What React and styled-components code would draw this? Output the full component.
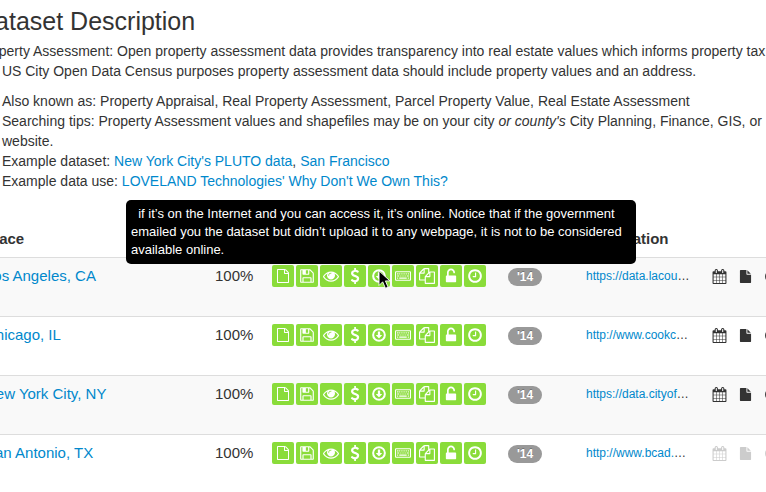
import React from 'react';
import styled, { createGlobalStyle, css } from 'styled-components';

const GlobalStyle = createGlobalStyle`
  body {
    margin: 0;
    background: #fff;
    color: #333;
    font: 14px/20px "Liberation Sans", Arial, sans-serif;
  }
`;

const Viewport = styled.div`
  overflow: hidden;
`;

const Page = styled.main`
  margin: 0 -23px;
  padding-top: 1px;
`;

const Title = styled.h3`
  margin: 0;
  font-size: 25px;
  font-weight: 400;
  line-height: 40px;
`;

const Intro = styled.p`
  margin: 0 0 10px;
`;

const Notes = styled.ul`
  margin: 0 0 36px 25px;
  padding: 0;
  list-style: none;
`;

const Link = styled.a`
  color: #0088cc;
  text-decoration: none;
`;

const Table = styled.table`
  width: 100%;
  table-layout: fixed;
  border-collapse: collapse;
  font-size: 15px;
`;

const Column = styled.col`
  width: ${(p) => p.$width}px;
`;

const HeadCell = styled.th`
  height: 20px;
  padding: 2px 8px 8px;
  text-align: left;
`;

const Row = styled.tr`
  background: ${(p) => (p.$shaded ? '#f9f9f9' : '#fff')};
`;

const Cell = styled.td`
  box-sizing: border-box;
  height: 59px;
  padding: 7px 8px;
  border-top: 1px solid #ddd;
  vertical-align: top;
  line-height: 22px;
  white-space: nowrap;
`;

const Badges = styled.div`
  display: flex;
  gap: 2px;
`;

const BadgeHolder = styled.div`
  position: relative;
`;

const Badge = styled.button`
  display: flex;
  align-items: center;
  justify-content: center;
  width: 22px;
  height: 22px;
  padding: 0;
  border: 0;
  border-radius: 2px;
  background: #8adc3a;
  color: #fff;
`;

const Tooltip = styled.div`
  position: absolute;
  bottom: calc(100% + 1px);
  left: -242px;
  z-index: 1;
  box-sizing: border-box;
  width: 510px;
  padding: 5px;
  border-radius: 5px;
  background: #000;
  color: #fff;
  font-size: 13px;
  line-height: 18px;
  white-space: normal;
`;

const Cursor = styled.svg`
  position: absolute;
  top: 5px;
  left: 10px;
  z-index: 2;
  width: 13px;
  height: 20px;
`;

const Line = styled.div`
  display: flex;
  align-items: center;
  height: 22px;
  gap: ${(p) => p.$gap || 0}px;
`;

const Year = styled.span`
  margin-top: 2px;
  padding: 0 9px;
  border-radius: 9px;
  background: #999;
  color: #fff;
  font-size: 12px;
  font-weight: 700;
  line-height: 18px;
  text-shadow: 0 -1px 0 rgba(0, 0, 0, 0.25);
`;

const Source = styled.span`
  font-size: 12px;
`;

const Glyph = styled.svg`
  display: block;
  flex: none;
  fill: currentColor;
  ${(p) => css`
    width: ${p.$size}px;
    height: ${p.$size}px;
    color: ${p.$color || 'inherit'};
  `}
`;

const PATHS = {
  file: 'M1596 380q28 28 48 76t20 88v1152q0 40-28 68t-68 28h-1344q-40 0-68-28t-28-68v-1600q0-40 28-68t68-28h896q40 0 88 20t76 48zm-444-244v376h376q-10-29-22-41l-313-313q-12-12-41-22zm384 1528v-1024h-416q-40 0-68-28t-28-68v-416h-768v1536h1280z',
  save: 'M512 1536h768v-384h-768v384zm896 0h128v-896q0-14-10-38.5t-20-34.5l-281-281q-10-10-34-20t-39-10v416q0 40-28 68t-68 28h-576q-40 0-68-28t-28-68v-416h-128v1280h128v-416q0-40 28-68t68-28h832q40 0 68 28t28 68v416zm-384-928v-320q0-13-9.5-22.5t-22.5-9.5h-192q-13 0-22.5 9.5t-9.5 22.5v320q0 13 9.5 22.5t22.5 9.5h192q13 0 22.5-9.5t9.5-22.5zm640 32v928q0 40-28 68t-68 28h-1344q-40 0-68-28t-28-68v-1344q0-40 28-68t68-28h928q40 0 88 20t76 48l280 280q28 28 48 76t20 88z',
  eye: 'M1664 960q-152-236-381-353 61 104 61 225 0 185-131.5 316.5t-316.5 131.5-316.5-131.5-131.5-316.5q0-121 61-225-229 117-381 353 133 205 333.5 326.5t434.5 121.5 434.5-121.5 333.5-326.5zm-720-384q0-20-14-34t-34-14q-125 0-214.5 89.5t-89.5 214.5q0 20 14 34t34 14 34-14 14-34q0-86 61-147t147-61q20 0 34-14t14-34zm848 384q0 34-20 69-140 230-376.5 368.5t-499.5 138.5-499.5-139-376.5-368q-20-35-20-69t20-69q140-229 376.5-368t499.5-139 499.5 139 376.5 368q20 35 20 69z',
  dollar: 'M1362 1185q0 153-99.5 263.5t-258.5 136.5v175q0 14-9 23t-23 9h-135q-13 0-22.5-9.5t-9.5-22.5v-175q-66-9-127.5-31t-101.5-44.5-74-48-46.5-37.5-17.5-18q-17-21-2-41l103-135q7-10 23-12 15-2 24 9l2 2q113 99 243 125 37 8 74 8 81 0 142.5-43t61.5-122q0-28-15-53t-33.5-42-58.5-37.5-66-32-80-32.5q-39-16-61.5-25t-61.5-26.5-62.5-31-56.5-35.5-53.5-42.5-43.5-49-35.5-58-21-66.5-8.5-78q0-138 98-242t255-134v-180q0-13 9.5-22.5t22.5-9.5h135q14 0 23 9t9 23v176q57 6 110.5 23t87 33.5 63.5 37.5 39 29 15 14q17 18 5 38l-81 146q-8 15-23 16-14 3-27-7-3-3-14.5-12t-39-26.5-58.5-32-74.5-26-85.5-11.5q-95 0-155 43t-60 111q0 26 8.5 48t29.5 41.5 39.5 33 56 31 60.5 27 70 27.5q53 20 81 31.5t76 35 75.5 42.5 62 50 53 63.5 31.5 76.5 13 94z',
  down: 'M896 128a768 768 0 1 0 0 1536a768 768 0 1 0 0-1536zM896 352a544 544 0 1 1 0 1088a544 544 0 1 1 0-1088zM800 512h192q32 0 32 32v352h192q34 0 20 38l-318 320q-22 20-44 0l-320-320q-16-38 18-38h196v-352q0-32 32-32z',
  keyboard: 'M0 384q0-128 128-128h1664q128 0 128 128v896q0 128-128 128h-1664q-128 0-128-128zM128 384v896h1664v-896zM256 512h160v128h-160zM512 512h128v128h-128zM768 512h128v128h-128zM1024 512h128v128h-128zM1280 512h128v128h-128zM1536 512h128v128h-128zM256 768h256v128h-256zM640 768h128v128h-128zM896 768h128v128h-128zM1152 768h128v128h-128zM1408 768h256v128h-256zM256 1024h128v128h-128zM512 1024h896v128h-896zM1536 1024h128v128h-128z',
  copy: 'M1696 384q40 0 68 28t28 68v1216q0 40-28 68t-68 28h-960q-40 0-68-28t-28-68v-288h-544q-40 0-68-28t-28-68v-672q0-40 20-88t48-76l408-408q28-28 76-48t88-20h416q40 0 68 28t28 68v328q68-40 128-40h416zm-544 213l-299 299h299v-299zm-640-384l-299 299h299v-299zm196 647l316-316v-416h-384v416q0 40-28 68t-68 28h-416v640h512v-256q0-40 20-88t48-76zm956 804v-1152h-384v416q0 40-28 68t-68 28h-416v640h896z',
  unlock: 'M1376 768q40 0 68 28t28 68v576q0 40-28 68t-68 28h-960q-40 0-68-28t-28-68v-576q0-40 28-68t68-28h32v-320q0-185 131.5-316.5t316.5-131.5 316.5 131.5 131.5 316.5q0 26-19 45t-45 19h-64q-26 0-45-19t-19-45q0-106-75-181t-181-75-181 75-75 181v320h736z',
  clock: 'M1024 544v448q0 14-9 23t-23 9h-320q-14 0-23-9t-9-23v-64q0-14 9-23t23-9h224v-352q0-14 9-23t23-9h64q14 0 23 9t9 23zm416 352q0-148-73-273t-198-198-273-73-273 73-198 198-73 273 73 273 198 198 273 73 273-73 198-198 73-273zm224 0q0 209-103 385.5t-279.5 279.5-385.5 103-385.5-103-279.5-279.5-103-385.5 103-385.5 279.5-279.5 385.5-103 385.5 103 279.5 279.5 103 385.5z',
  calendar: 'M192 1664h288v-288h-288v288zm352 0h320v-288h-320v288zm-352-352h288v-320h-288v320zm352 0h320v-320h-320v320zm-352-384h288v-288h-288v288zm736 736h320v-288h-320v288zm-384-736h320v-288h-320v288zm768 736h288v-288h-288v288zm-384-352h320v-320h-320v320zm-352-864v-288q0-13-9.5-22.5t-22.5-9.5h-64q-13 0-22.5 9.5t-9.5 22.5v288q0 13 9.5 22.5t22.5 9.5h64q13 0 22.5-9.5t9.5-22.5zm736 864h288v-320h-288v320zm-384-384h320v-288h-320v288zm384 0h288v-288h-288v288zm32-480v-288q0-13-9.5-22.5t-22.5-9.5h-64q-13 0-22.5 9.5t-9.5 22.5v288q0 13 9.5 22.5t22.5 9.5h64q13 0 22.5-9.5t9.5-22.5zm384-64v1280q0 52-38 90t-90 38h-1408q-52 0-90-38t-38-90v-1280q0-52 38-90t90-38h128v-96q0-66 47-113t113-47h64q66 0 113 47t47 113v96h384v-96q0-66 47-113t113-47h64q66 0 113 47t47 113v96h128q52 0 90 38t38 90z',
  document: 'M1152 512v-472q22 14 36 28l408 408q14 14 28 36h-472zm-128 32q0 40 28 68t68 28h544v1056q0 40-28 68t-68 28h-1344q-40 0-68-28t-28-68v-1600q0-40 28-68t68-28h800v544z',
};

const Icon = ({ name, size = 14, color, viewBox = '0 0 1792 1792' }) => (
  <Glyph viewBox={viewBox} $size={size} $color={color} fillRule="evenodd" aria-hidden="true">
    <path d={PATHS[name]} />
  </Glyph>
);

const CHECKS = [
  { name: 'file', label: 'Data exists' },
  { name: 'save', label: 'Digital form', size: 16 },
  { name: 'eye', label: 'Publicly available', size: 16 },
  { name: 'dollar', label: 'Free of charge', size: 16 },
  { name: 'down', label: 'Available online', size: 16 },
  { name: 'keyboard', label: 'Machine readable', size: 16, viewBox: '0 -64 1920 1792' },
  { name: 'copy', label: 'Available in bulk', size: 16 },
  { name: 'unlock', label: 'Openly licensed', size: 16, viewBox: '0 0 1792 1664' },
  { name: 'clock', label: 'Up to date', size: 16 },
];

const CITIES = [
  { name: 'Los Angeles, CA', url: 'https://data.lacou', active: true, hovered: 'down' },
  { name: 'Chicago, IL', url: 'http://www.cookc', active: true },
  { name: 'New York City, NY', url: 'https://data.cityof', active: true },
  { name: 'San Antonio, TX', url: 'http://www.bcad.', active: false },
];

const COLUMNS = [230, 57, 236, 78, 126];

function CheckBadges({ hovered }) {
  return (
    <Badges>
      {CHECKS.map(({ label, ...icon }) => (
        <BadgeHolder key={icon.name}>
          <Badge type="button" aria-label={label}>
            <Icon {...icon} />
          </Badge>
          {hovered === icon.name && (
            <>
              <Tooltip role="tooltip">
                &nbsp; if it’s on the Internet and you can access it, it’s online. Notice that if the
                government emailed you the dataset but didn’t upload it to any webpage, it is not to be
                considered available online.
              </Tooltip>
              <Cursor viewBox="0 0 14 22" aria-hidden="true">
                <path
                  d="M1 1v16l4-4 3 7 3-1-3-7h5z"
                  fill="#000"
                  stroke="#fff"
                  strokeWidth="1"
                />
              </Cursor>
            </>
          )}
        </BadgeHolder>
      ))}
    </Badges>
  );
}

export default function App() {
  return (
    <Viewport>
      <GlobalStyle />
      <Page>
        <Title>Dataset Description</Title>
        <Intro>
          Property Assessment: Open property assessment data provides transparency into real estate
          values which informs property tax. For US City Open Data Census purposes property
          assessment data should include property values and an address.
        </Intro>
        <Notes>
          <li>
            Also known as: Property Appraisal, Real Property Assessment, Parcel Property Value, Real
            Estate Assessment
          </li>
          <li>
            Searching tips: Property Assessment values and shapefiles may be on your city{' '}
            <em>or county's</em> City Planning, Finance, GIS, or website.
          </li>
          <li>
            Example dataset: <Link href="#pluto">New York City's PLUTO data</Link>,{' '}
            <Link href="#san-francisco">San Francisco</Link>
          </li>
          <li>
            Example data use: <Link href="#loveland">LOVELAND Technologies' Why Don't We Own This?</Link>
          </li>
        </Notes>
        <Table>
          <colgroup>
            {COLUMNS.map((width) => (
              <Column key={width} $width={width} />
            ))}
            <col />
          </colgroup>
          <thead>
            <tr>
              <HeadCell scope="col">Place</HeadCell>
              <HeadCell />
              <HeadCell />
              <HeadCell />
              <HeadCell scope="col">Information</HeadCell>
              <HeadCell />
            </tr>
          </thead>
          <tbody>
            {CITIES.map((city, index) => {
              const tone = city.active ? '#333' : '#ccc';
              return (
                <Row key={city.name} $shaded={index % 2 === 0}>
                  <Cell>
                    <Link href="#place">{city.name}</Link>
                  </Cell>
                  <Cell>100%</Cell>
                  <Cell>
                    <CheckBadges hovered={city.hovered} />
                  </Cell>
                  <Cell>
                    <Line>
                      <Year>'14</Year>
                    </Line>
                  </Cell>
                  <Cell>
                    <Line>
                      <Source>
                        <Link href="#source">{city.url}</Link>…
                      </Source>
                    </Line>
                  </Cell>
                  <Cell>
                    <Line $gap={12}>
                      <Icon name="calendar" size={15} color={tone} />
                      <Icon name="document" size={13} color={tone} />
                      <Icon name="clock" size={15} color={tone} />
                    </Line>
                  </Cell>
                </Row>
              );
            })}
          </tbody>
        </Table>
      </Page>
    </Viewport>
  );
}
